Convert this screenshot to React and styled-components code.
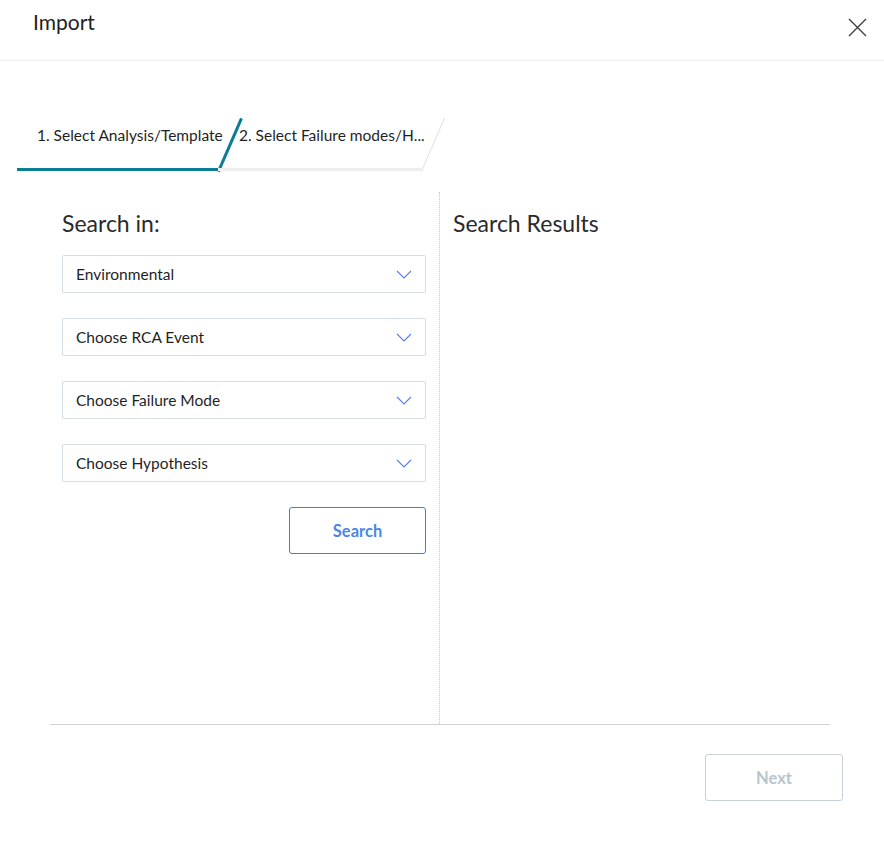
import React from "react";
import styled, { createGlobalStyle } from "styled-components";

const Global = createGlobalStyle`
  html, body { margin: 0; padding: 0; background: #fff; }
  body { font-family: "Source Sans Pro", Lato, "Noto Sans", sans-serif; color: #1f1f1f; }
  * { box-sizing: border-box; }
`;

const Dialog = styled.div`
  width: 884px;
  height: 850px;
  display: flex;
  flex-direction: column;
  background: #fff;
`;

const Header = styled.div`
  height: 61px;
  border-bottom: 1px solid #ececec;
  display: flex;
  justify-content: space-between;
  align-items: flex-start;
  padding: 9px 17px 0 33px;
`;

const Title = styled.h1`
  margin: 0;
  font-size: 21px;
  font-weight: 400;
  line-height: 26px;
  color: #222;
`;

const CloseButton = styled.button`
  border: 0;
  background: none;
  padding: 0;
  margin-top: 9px;
  width: 20px;
  height: 20px;
  cursor: pointer;
`;

const TabBar = styled.div`
  display: flex;
  margin: 57px 0 0 17px;
  height: 53px;
`;

const Tab = styled.div`
  position: relative;
  width: ${(p) => p.$w}px;
  height: 53px;
  padding: 7px 0 0 ${(p) => p.$pad}px;
  font-size: 15.5px;
  line-height: 20px;
  color: #1f1f1f;
  white-space: nowrap;
  border-bottom: 3px solid ${(p) => (p.$active ? "#0b7d94" : "#eeeeee")};
  &::after {
    content: "";
    position: absolute;
    left: calc(100% - ${(p) => (p.$active ? 1 : 0)}px);
    bottom: -3px;
    width: ${(p) => (p.$active ? 3 : 1)}px;
    height: 58px;
    background: ${(p) => (p.$active ? "#0b7d94" : "#e2e2e2")};
    transform-origin: bottom left;
    transform: rotate(23.5deg);
  }
`;

const Body = styled.div`
  display: flex;
  margin: 21px 54px 0 50px;
  height: 533px;
  border-bottom: 1px solid #cfd3d6;
`;

const LeftPane = styled.div`
  width: 390px;
  padding: 18px 13px 0 12px;
  border-right: 1px dotted #c4c4c4;
  display: flex;
  flex-direction: column;
`;

const RightPane = styled.div`
  flex: 1;
  padding: 18px 0 0 13px;
`;

const PaneTitle = styled.h2`
  margin: 0 0 18px;
  font-size: 23px;
  font-weight: 400;
  line-height: 27px;
  color: #2a2a2a;
`;

const SelectList = styled.div`
  display: flex;
  flex-direction: column;
  gap: 25px;
`;

const Select = styled.div`
  height: 38px;
  border: 1px solid #d6dbe0;
  border-radius: 2px;
  display: flex;
  align-items: center;
  justify-content: space-between;
  padding: 0 13px 0 13px;
  font-size: 15.5px;
  color: #1f1f1f;
`;

const Actions = styled.div`
  display: flex;
  justify-content: flex-end;
  margin-top: 25px;
`;

const Button = styled.button`
  width: ${(p) => p.$w}px;
  height: 47px;
  background: #fff;
  border: 1px solid ${(p) => (p.$disabled ? "#c9d1d8" : "#3f7fdc")};
  border-radius: 3px;
  color: ${(p) => (p.$disabled ? "#b9c5ce" : "#4a88e4")};
  font-family: inherit;
  font-size: 16.5px;
  font-weight: 700;
  cursor: ${(p) => (p.$disabled ? "default" : "pointer")};
`;

const Footer = styled.div`
  display: flex;
  justify-content: flex-end;
  padding: 29px 41px 0 0;
`;

const Chevron = () => (
  <svg width="16" height="9" viewBox="0 0 16 9" fill="none">
    <path d="M1 1l7 7 7-7" stroke="#5b7ff0" strokeWidth="1.2" />
  </svg>
);

const selects = ["Environmental", "Choose RCA Event", "Choose Failure Mode", "Choose Hypothesis"];

export default function App() {
  return (
    <>
      <Global />
      <Dialog>
        <Header>
          <Title>Import</Title>
          <CloseButton aria-label="Close">
            <svg width="19" height="19" viewBox="0 0 19 19">
              <path d="M1 1l17 17M18 1L1 18" stroke="#3a3a3a" strokeWidth="1.3" />
            </svg>
          </CloseButton>
        </Header>
        <TabBar>
          <Tab $active $w={201} $pad={20}>1. Select Analysis/Template</Tab>
          <Tab $w={203} $pad={21}>2. Select Failure modes/H...</Tab>
        </TabBar>
        <Body>
          <LeftPane>
            <PaneTitle>Search in:</PaneTitle>
            <SelectList>
              {selects.map((s) => (
                <Select key={s}>
                  <span>{s}</span>
                  <Chevron />
                </Select>
              ))}
            </SelectList>
            <Actions>
              <Button $w={137}>Search</Button>
            </Actions>
          </LeftPane>
          <RightPane>
            <PaneTitle>Search Results</PaneTitle>
          </RightPane>
        </Body>
        <Footer>
          <Button $w={138} $disabled>Next</Button>
        </Footer>
      </Dialog>
    </>
  );
}
